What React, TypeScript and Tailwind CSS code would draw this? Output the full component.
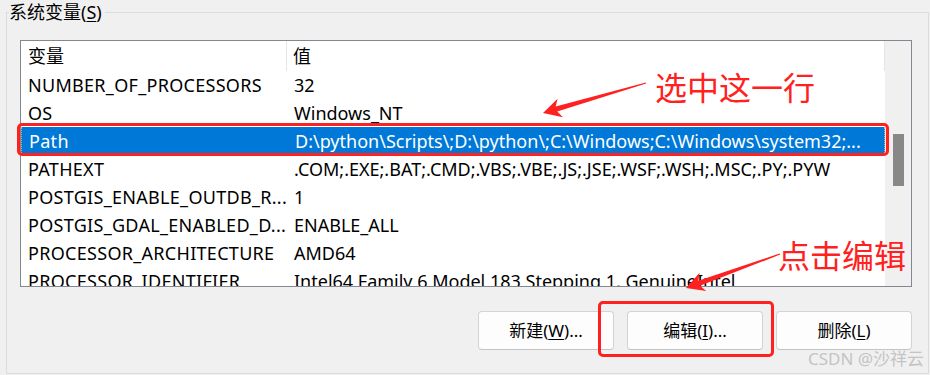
import React from "react";

// --- Dados da lista de variáveis do sistema ---
const rows: [string, string][] = [
  ["NUMBER_OF_PROCESSORS", "32"],
  ["OS", "Windows_NT"],
  ["Path", "D:\\python\\Scripts\\;D:\\python\\;C:\\Windows;C:\\Windows\\system32;..."],
  ["PATHEXT", ".COM;.EXE;.BAT;.CMD;.VBS;.VBE;.JS;.JSE;.WSF;.WSH;.MSC;.PY;.PYW"],
  ["POSTGIS_ENABLE_OUTDB_R...", "1"],
  ["POSTGIS_GDAL_ENABLED_D...", "ENABLE_ALL"],
  ["PROCESSOR_ARCHITECTURE", "AMD64"],
  ["PROCESSOR_IDENTIFIER", "Intel64 Family 6 Model 183 Stepping 1, GenuineIntel"],
];

const SELECTED = 2;

// seta afunilada (estilo captura de tela)
const arrowPoints = (tail: [number, number], tip: [number, number]) => {
  const dx = tip[0] - tail[0];
  const dy = tip[1] - tail[1];
  const len = Math.hypot(dx, dy);
  const ux = dx / len;
  const uy = dy / len;
  const nx = -uy;
  const ny = ux;
  const at = (back: number, side: number): string =>
    `${tip[0] - ux * back + nx * side},${tip[1] - uy * back + ny * side}`;
  return [
    at(len, 0.6),
    at(14, 2.6),
    at(18, 9.6),
    at(0, 0),
    at(18, -9.6),
    at(14, -2.6),
    at(len, -0.6),
  ].join(" ");
};

const Button: React.FC<{ label: string; mnemonic: string; suffix: string }> = ({ label, mnemonic, suffix }) => (
  <button
    type="button"
    className="w-[136px] h-[39px] rounded-[4px] border border-[#d3d3d3] border-b-[#c4c4c4] bg-[#fdfdfd] text-[17px] text-black flex items-center justify-center"
  >
    {label}(<u className="underline-offset-2">{mnemonic}</u>){suffix}
  </button>
);

export default function App() {
  return (
    <div className="relative w-[930px] h-[375px] overflow-hidden bg-[#f0f0f0] font-['Noto_Sans','Noto_Sans_CJK_SC',sans-serif] text-black">
      {/* Group box */}
      <div className="pt-[12px] pl-[6px] pr-[1px] pb-[1px] h-full">
        <div className="relative h-full border border-[#dcdcdc] pl-[13px] pr-[16px] pt-[27px]">
          <span className="absolute -top-[12px] left-[2px] bg-[#f0f0f0] pr-[3px] text-[18px] leading-[22px]">
            系统变量(<u className="underline-offset-2">S</u>)
          </span>

          {/* List view */}
          <div className="flex h-[247px] border border-[#828790] bg-white overflow-hidden">
            <div className="flex-1 flex flex-col text-[18px] leading-[26px]">
              <div className="flex h-[30px] shrink-0 items-center">
                <div className="w-[266px] h-full flex items-center pl-[7px] border-r border-[#e5e5e5]">变量</div>
                <div className="flex-1 h-full flex items-center pl-[6px] border-r border-[#e5e5e5]">值</div>
              </div>
              {rows.map(([name, value], i) => (
                <div
                  key={name}
                  className={
                    i === SELECTED
                      ? "flex h-[28px] shrink-0 items-center bg-[#0078d7] text-white border-x border-dotted border-[#e8b070]"
                      : "flex h-[28px] shrink-0 items-center"
                  }
                >
                  <div className="w-[266px] pl-[7px] whitespace-nowrap overflow-hidden tracking-[0.3px]">{name}</div>
                  <div className="flex-1 pl-[7px] whitespace-nowrap overflow-hidden">{value}</div>
                </div>
              ))}
            </div>
            {/* Scrollbar */}
            <div className="w-[26px] bg-[#f0f0f0] pt-[93px] flex justify-center">
              <div className="w-[11px] h-[52px] bg-[#888888]" />
            </div>
          </div>

          {/* Buttons */}
          <div className="flex justify-end gap-[13px] mt-[24px]">
            <Button label="新建" mnemonic="W" suffix="..." />
            <Button label="编辑" mnemonic="I" suffix="..." />
            <Button label="删除" mnemonic="L" suffix="" />
          </div>
        </div>
      </div>

      {/* Anotações */}
      <div className="absolute left-[17px] top-[123px] w-[872px] h-[33px] border-[3px] border-[#ff2020] rounded-[5px]" />
      <div className="absolute left-[598px] top-[301px] w-[176px] h-[56px] border-[3px] border-[#ff2020] rounded-[5px]" />

      <svg className="absolute inset-0 pointer-events-none" width="930" height="375">
        <polygon points={arrowPoints([646, 83], [543, 113])} fill="#ff2020" />
        <polygon points={arrowPoints([780, 254], [686, 288])} fill="#ff2020" />
      </svg>

      <span className="absolute left-[655px] top-[70px] text-[32px] leading-none text-[#ff2020] font-['Noto_Sans_CJK_SC',sans-serif]">
        选中这一行
      </span>
      <span className="absolute left-[778px] top-[238px] text-[32px] leading-none text-[#ff2020] font-['Noto_Sans_CJK_SC',sans-serif]">
        点击编辑
      </span>

      <span className="absolute left-[808px] top-[348px] text-[17px] leading-[22px] text-[#c4c4c4]">CSDN @沙祥云</span>
    </div>
  );
}
